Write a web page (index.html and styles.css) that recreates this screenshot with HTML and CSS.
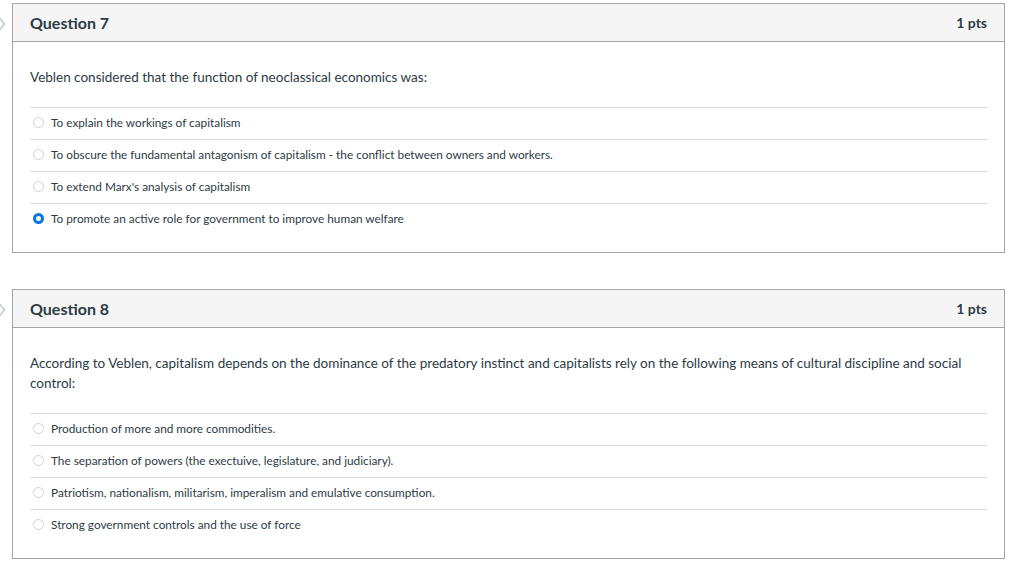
FILE: index.html
```html
<!DOCTYPE html>
<html lang="en">
<head>
    <meta charset="UTF-8">
    <title>Quiz</title>
    <link rel="stylesheet" href="styles.css">
</head>
<body>
    <div class="quiz">
        <div class="question">
            <svg class="flag" width="8" height="18" viewBox="0 0 8 18"><path d="M-2 1 L4.5 9 L-2 17" fill="none" stroke="#b8c3cc" stroke-width="1.3"/></svg>
            <div class="question-header">
                <span class="q-title">Question 7</span>
                <span class="q-pts">1 pts</span>
            </div>
            <div class="question-body">
                <p class="q-text">Veblen considered that the function of neoclassical economics was:</p>
                <div class="answers">
                    <label class="answer"><span class="radio"></span>To explain the workings of capitalism</label>
                    <label class="answer"><span class="radio"></span>To obscure the fundamental antagonism of capitalism - the conflict between owners and workers.</label>
                    <label class="answer"><span class="radio"></span>To extend Marx's analysis of capitalism</label>
                    <label class="answer"><span class="radio checked"></span>To promote an active role for government to improve human welfare</label>
                </div>
            </div>
        </div>

        <div class="question">
            <svg class="flag" width="8" height="18" viewBox="0 0 8 18"><path d="M-2 1 L4.5 9 L-2 17" fill="none" stroke="#b8c3cc" stroke-width="1.3"/></svg>
            <div class="question-header">
                <span class="q-title">Question 8</span>
                <span class="q-pts">1 pts</span>
            </div>
            <div class="question-body">
                <p class="q-text">According to Veblen, capitalism depends on the dominance of the predatory instinct and capitalists rely on the following means of cultural discipline and social control:</p>
                <div class="answers">
                    <label class="answer"><span class="radio"></span>Production of more and more commodities.</label>
                    <label class="answer"><span class="radio"></span>The separation of powers (the exectuive, legislature, and judiciary).</label>
                    <label class="answer"><span class="radio"></span>Patriotism, nationalism, militarism, imperalism and emulative consumption.</label>
                    <label class="answer"><span class="radio"></span>Strong government controls and the use of force</label>
                </div>
            </div>
        </div>
    </div>
</body>
</html>
```

FILE: styles.css
```css
body { margin: 0; background: #fff; font-family: Lato, "Open Sans", sans-serif; color: #2d3b45; }
.quiz { padding: 3px 19px 0 12px; display: flex; flex-direction: column; gap: 36px; }
.question { position: relative; border: 1px solid #a5a5a5; }
.flag { position: absolute; left: -13px; top: 11px; }
.question-header {
    display: flex;
    justify-content: space-between;
    align-items: center;
    height: 37px;
    padding: 0 17px;
    background: #f5f5f5;
    border-bottom: 1px solid #a5a5a5;
}
.q-title { font-size: 16px; font-weight: bold; }
.q-pts { font-size: 14px; font-weight: bold; }
.question-body { padding: 25px 17px 17px 17px; }
.q-text { margin: 0 0 20px 0; font-size: 13.5px; line-height: 20px; padding-right: 20px; }
.answers { border-top: 1px solid #dadada; }
.answer {
    display: flex;
    align-items: center;
    height: 28px;
    padding: 0 0 3px 3px;
    border-bottom: 1px solid #dadada;
    font-size: 11.8px;
    font-weight: 400;
}
.answers .answer:last-child { border-bottom: none; }
.radio {
    width: 9px;
    height: 9px;
    border: 1px solid #cfcfcf;
    border-radius: 50%;
    margin-right: 7px;
    box-sizing: content-box;
    background: #fff;
}
.radio.checked { border: 3px solid #0b74de; width: 5px; height: 5px; background: #fff; }
```
